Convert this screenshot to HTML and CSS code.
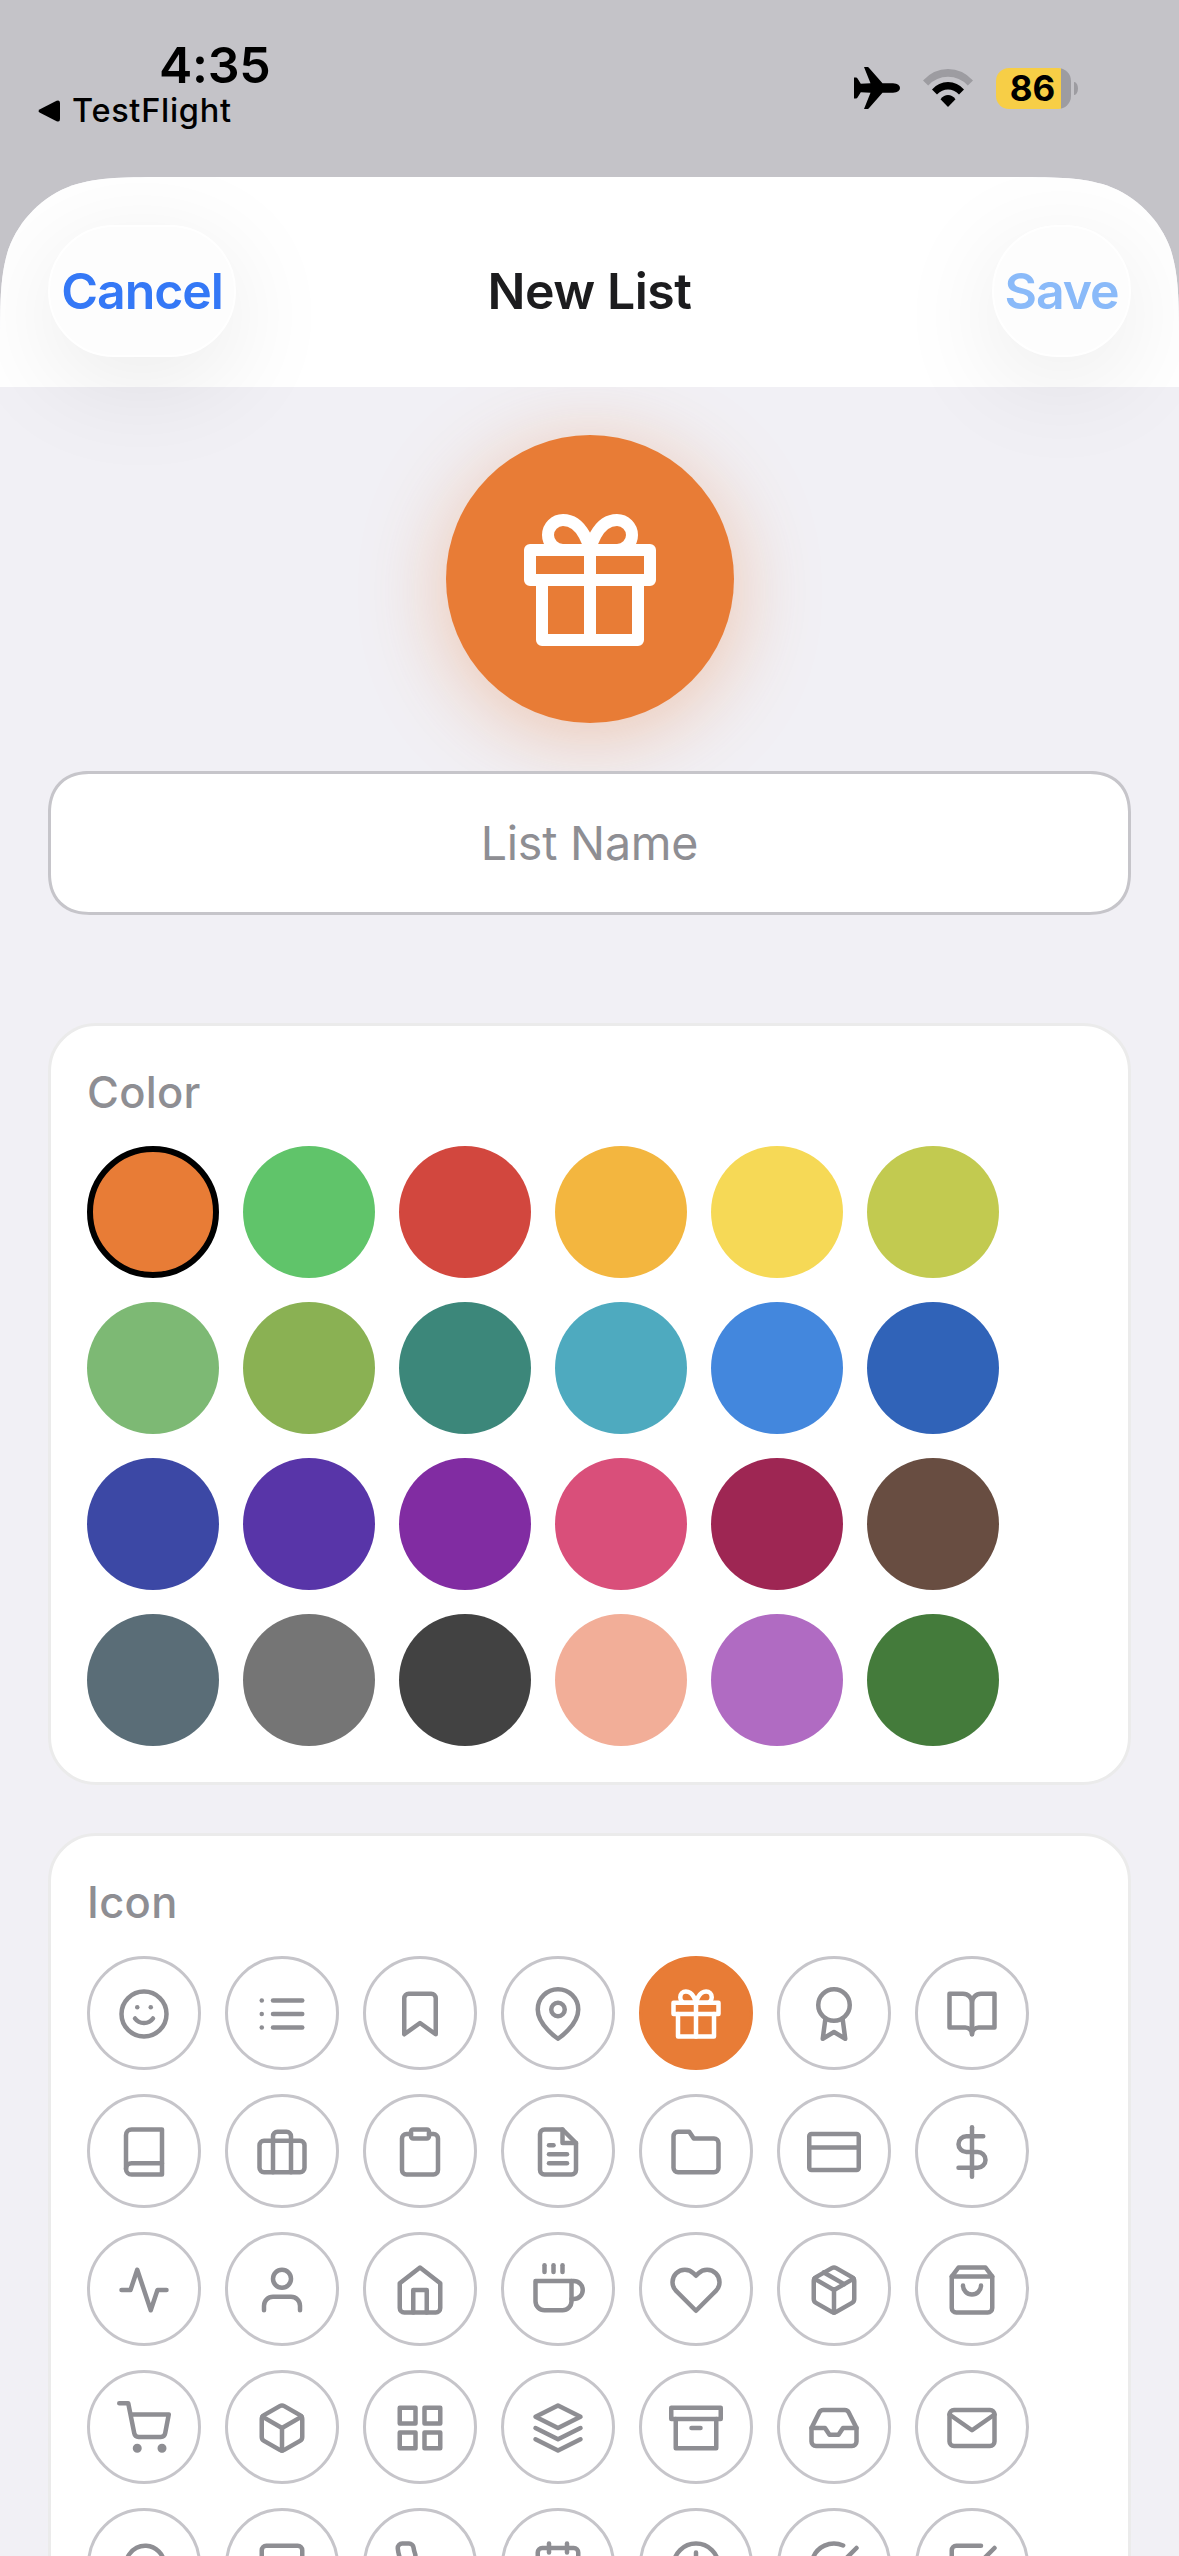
FILE: index.html
```html
<!DOCTYPE html>
<html lang="en">
<head>
    <meta charset="UTF-8">
    <meta name="viewport" content="width=device-width, initial-scale=1.0">
    <title>New List</title>
    <link rel="stylesheet" href="styles.css">
</head>
<body>
    <div class="statusbar">
        <div class="status-left">
            <div class="time">4:35</div>
            <div class="back">
                <svg class="back-arrow" viewBox="0 0 22 22"><path d="M2 9.2 18.6.8Q22-.6 22 3v16q0 3.600-3.400 2.200L2 12.800Q-1 11 2 9.200z"/></svg>
                <span>TestFlight</span>
            </div>
        </div>
        <div class="status-right">
            <svg class="plane" viewBox="0 0 46 42"><path d="M10 0h3.500q1 0 1.600 1L28.500 16.200H39q7 .8 7 4.800t-7 4.800H28.500L15.100 41q-.6 1-1.600 1H10l6.500-16.200-9.700-.5L3.500 30.500Q3 31.500 2 31.500H0V10.500h2q1 0 1.500 1l3.300 5.200 9.700-.5z"/></svg>
            <svg class="wifi" viewBox="0 0 50 38">
                <path class="dim" d="M0 11.500Q10.500 0 25 0t25 11.500L44.800 16.500Q36.500 7.800 25 7.800T5.200 16.500z"/>
                <path d="M9 20.500Q15.500 13 25 13t16 7.500L36 25.600Q31 20.600 25 20.600T14 25.600z"/>
                <path d="M17.500 30.200Q21 26 25 26t7.500 4.200L25 38z"/>
            </svg>
            <div class="battery">
                <div class="battery-body">86</div>
                <div class="battery-cap"></div>
            </div>
        </div>
    </div>

    <div class="sheet">
        <div class="header">
            <button class="btn cancel">Cancel</button>
            <h1>New List</h1>
            <button class="btn save" disabled>Save</button>
        </div>

        <div class="content">
            <div class="preview">
                <svg viewBox="0 0 24 24"><polyline points="20 12 20 22 4 22 4 12"/><rect x="2" y="7" width="20" height="5"/><line x1="12" y1="22" x2="12" y2="7"/><path d="M12 7H7.500a2.500 2.500 0 0 1 0-5C11 2 12 7 12 7z"/><path d="M12 7h4.500a2.500 2.500 0 0 0 0-5C13 2 12 7 12 7z"/></svg>
            </div>

            <input class="name" type="text" placeholder="List Name">

            <div class="card">
                <h2>Color</h2>
                <div class="colors">
                    <div class="color orange selected"></div>
                    <div class="color green"></div>
                    <div class="color red"></div>
                    <div class="color amber"></div>
                    <div class="color yellow"></div>
                    <div class="color lime"></div>
                    <div class="color light-green"></div>
                    <div class="color olive"></div>
                    <div class="color teal"></div>
                    <div class="color cyan"></div>
                    <div class="color blue"></div>
                    <div class="color dark-blue"></div>
                    <div class="color indigo"></div>
                    <div class="color violet"></div>
                    <div class="color purple"></div>
                    <div class="color pink"></div>
                    <div class="color maroon"></div>
                    <div class="color brown"></div>
                    <div class="color slate"></div>
                    <div class="color gray"></div>
                    <div class="color dark"></div>
                    <div class="color peach"></div>
                    <div class="color orchid"></div>
                    <div class="color forest"></div>
                </div>
            </div>

            <div class="card">
                <h2>Icon</h2>
                <div class="icons">
                    <div class="icon"><svg viewBox="0 0 24 24"><circle cx="12" cy="12" r="10"/><path d="M8 14s1.500 2 4 2 4-2 4-2"/><line x1="9" y1="9" x2="9.010" y2="9"/><line x1="15" y1="9" x2="15.010" y2="9"/></svg></div>
                    <div class="icon"><svg viewBox="0 0 24 24"><line x1="8" y1="6" x2="21" y2="6"/><line x1="8" y1="12" x2="21" y2="12"/><line x1="8" y1="18" x2="21" y2="18"/><line x1="3" y1="6" x2="3.010" y2="6"/><line x1="3" y1="12" x2="3.010" y2="12"/><line x1="3" y1="18" x2="3.010" y2="18"/></svg></div>
                    <div class="icon"><svg viewBox="0 0 24 24"><path d="M19 21l-7-5-7 5V5a2 2 0 0 1 2-2h10a2 2 0 0 1 2 2z"/></svg></div>
                    <div class="icon"><svg viewBox="0 0 24 24"><path d="M21 10c0 7-9 13-9 13s-9-6-9-13a9 9 0 0 1 18 0z"/><circle cx="12" cy="10" r="3"/></svg></div>
                    <div class="icon active"><svg viewBox="0 0 24 24"><polyline points="20 12 20 22 4 22 4 12"/><rect x="2" y="7" width="20" height="5"/><line x1="12" y1="22" x2="12" y2="7"/><path d="M12 7H7.500a2.500 2.500 0 0 1 0-5C11 2 12 7 12 7z"/><path d="M12 7h4.500a2.500 2.500 0 0 0 0-5C13 2 12 7 12 7z"/></svg></div>
                    <div class="icon"><svg viewBox="0 0 24 24"><circle cx="12" cy="8" r="7"/><polyline points="8.210 13.890 7 23 12 20 17 23 15.790 13.880"/></svg></div>
                    <div class="icon"><svg viewBox="0 0 24 24"><path d="M2 3h6a4 4 0 0 1 4 4v14a3 3 0 0 0-3-3H2z"/><path d="M22 3h-6a4 4 0 0 0-4 4v14a3 3 0 0 1 3-3h7z"/></svg></div>

                    <div class="icon"><svg viewBox="0 0 24 24"><path d="M4 19.500A2.500 2.500 0 0 1 6.500 17H20"/><path d="M6.500 2H20v20H6.500A2.500 2.500 0 0 1 4 19.500v-15A2.500 2.500 0 0 1 6.500 2z"/></svg></div>
                    <div class="icon"><svg viewBox="0 0 24 24"><rect x="2" y="7" width="20" height="14" rx="2" ry="2"/><path d="M16 21V5a2 2 0 0 0-2-2h-4a2 2 0 0 0-2 2v16"/></svg></div>
                    <div class="icon"><svg viewBox="0 0 24 24"><path d="M16 4h2a2 2 0 0 1 2 2v14a2 2 0 0 1-2 2H6a2 2 0 0 1-2-2V6a2 2 0 0 1 2-2h2"/><rect x="8" y="2" width="8" height="4" rx="1" ry="1"/></svg></div>
                    <div class="icon"><svg viewBox="0 0 24 24"><path d="M14 2H6a2 2 0 0 0-2 2v16a2 2 0 0 0 2 2h12a2 2 0 0 0 2-2V8z"/><polyline points="14 2 14 8 20 8"/><line x1="16" y1="13" x2="8" y2="13"/><line x1="16" y1="17" x2="8" y2="17"/><polyline points="10 9 9 9 8 9"/></svg></div>
                    <div class="icon"><svg viewBox="0 0 24 24"><path d="M22 19a2 2 0 0 1-2 2H4a2 2 0 0 1-2-2V5a2 2 0 0 1 2-2h5l2 3h9a2 2 0 0 1 2 2z"/></svg></div>
                    <div class="icon"><svg viewBox="0 0 24 24"><rect x="1" y="4" width="22" height="16" rx="1" ry="1"/><line x1="1" y1="10" x2="23" y2="10"/></svg></div>
                    <div class="icon"><svg viewBox="0 0 24 24"><line x1="12" y1="1" x2="12" y2="23"/><path d="M17 5H9.500a3.500 3.500 0 0 0 0 7h5a3.500 3.500 0 0 1 0 7H6"/></svg></div>

                    <div class="icon"><svg viewBox="0 0 24 24"><polyline points="22 12 18 12 15 21 9 3 6 12 2 12"/></svg></div>
                    <div class="icon"><svg viewBox="0 0 24 24"><path d="M20 21v-2a4 4 0 0 0-4-4H8a4 4 0 0 0-4 4v2"/><circle cx="12" cy="7" r="4"/></svg></div>
                    <div class="icon"><svg viewBox="0 0 24 24"><path d="M3 9l9-7 9 7v11a2 2 0 0 1-2 2H5a2 2 0 0 1-2-2z"/><polyline points="9 22 9 12 15 12 15 22"/></svg></div>
                    <div class="icon"><svg viewBox="0 0 24 24"><path d="M18 8h1a4 4 0 0 1 0 8h-1"/><path d="M2 8h16v9a4 4 0 0 1-4 4H6a4 4 0 0 1-4-4V8z"/><line x1="6" y1="1" x2="6" y2="4"/><line x1="10" y1="1" x2="10" y2="4"/><line x1="14" y1="1" x2="14" y2="4"/></svg></div>
                    <div class="icon"><svg viewBox="0 0 24 24"><path d="M20.840 4.610a5.500 5.500 0 0 0-7.780 0L12 5.670l-1.060-1.060a5.500 5.500 0 0 0-7.780 7.780l1.060 1.060L12 21.230l7.780-7.780 1.060-1.060a5.500 5.500 0 0 0 0-7.780z"/></svg></div>
                    <div class="icon"><svg viewBox="0 0 24 24"><line x1="16.500" y1="9.400" x2="7.500" y2="4.210"/><path d="M21 16V8a2 2 0 0 0-1-1.730l-7-4a2 2 0 0 0-2 0l-7 4A2 2 0 0 0 3 8v8a2 2 0 0 0 1 1.730l7 4a2 2 0 0 0 2 0l7-4A2 2 0 0 0 21 16z"/><polyline points="3.270 6.960 12 12.010 20.730 6.960"/><line x1="12" y1="22.080" x2="12" y2="12"/></svg></div>
                    <div class="icon"><svg viewBox="0 0 24 24"><path d="M6 2L3 6v14a2 2 0 0 0 2 2h14a2 2 0 0 0 2-2V6l-3-4z"/><line x1="3" y1="6" x2="21" y2="6"/><path d="M16 10a4 4 0 0 1-8 0"/></svg></div>

                    <div class="icon"><svg viewBox="0 0 24 24"><circle cx="9" cy="21" r="1"/><circle cx="20" cy="21" r="1"/><path d="M1 1h4l2.680 13.390a2 2 0 0 0 2 1.610h9.720a2 2 0 0 0 2-1.610L23 6H6"/></svg></div>
                    <div class="icon"><svg viewBox="0 0 24 24"><path d="M21 16V8a2 2 0 0 0-1-1.730l-7-4a2 2 0 0 0-2 0l-7 4A2 2 0 0 0 3 8v8a2 2 0 0 0 1 1.730l7 4a2 2 0 0 0 2 0l7-4A2 2 0 0 0 21 16z"/><polyline points="3.270 6.960 12 12.010 20.730 6.960"/><line x1="12" y1="22.080" x2="12" y2="12"/></svg></div>
                    <div class="icon"><svg viewBox="0 0 24 24"><rect x="3" y="3" width="7" height="7"/><rect x="14" y="3" width="7" height="7"/><rect x="14" y="14" width="7" height="7"/><rect x="3" y="14" width="7" height="7"/></svg></div>
                    <div class="icon"><svg viewBox="0 0 24 24"><polygon points="12 2 2 7 12 12 22 7 12 2"/><polyline points="2 17 12 22 22 17"/><polyline points="2 12 12 17 22 12"/></svg></div>
                    <div class="icon"><svg viewBox="0 0 24 24"><polyline points="21 8 21 21 3 21 3 8"/><rect x="1" y="3" width="22" height="5"/><line x1="10" y1="12" x2="14" y2="12"/></svg></div>
                    <div class="icon"><svg viewBox="0 0 24 24"><polyline points="22 12 16 12 14 15 10 15 8 12 2 12"/><path d="M5.450 5.110L2 12v6a2 2 0 0 0 2 2h16a2 2 0 0 0 2-2v-6l-3.450-6.890A2 2 0 0 0 16.760 4H7.240a2 2 0 0 0-1.790 1.110z"/></svg></div>
                    <div class="icon"><svg viewBox="0 0 24 24"><path d="M4 4h16c1.100 0 2 .9 2 2v12c0 1.100-.9 2-2 2H4c-1.100 0-2-.9-2-2V6c0-1.100.9-2 2-2z"/><polyline points="22 6 12 13 2 6"/></svg></div>

                    <div class="icon"><svg viewBox="0 0 24 24"><path d="M21 11.500a8.380 8.380 0 0 1-.9 3.800 8.500 8.500 0 0 1-7.600 4.700 8.380 8.380 0 0 1-3.800-.9L3 21l1.900-5.700a8.380 8.380 0 0 1-.9-3.800 8.500 8.500 0 0 1 4.700-7.600 8.380 8.380 0 0 1 3.800-.9h.5a8.480 8.480 0 0 1 8 8v.5z"/></svg></div>
                    <div class="icon"><svg viewBox="0 0 24 24"><path d="M21 15a2 2 0 0 1-2 2H7l-4 4V5a2 2 0 0 1 2-2h14a2 2 0 0 1 2 2z"/></svg></div>
                    <div class="icon"><svg viewBox="0 0 24 24"><path d="M22 16.920v3a2 2 0 0 1-2.180 2 19.790 19.790 0 0 1-8.630-3.070 19.500 19.500 0 0 1-6-6 19.790 19.790 0 0 1-3.070-8.670A2 2 0 0 1 4.110 2h3a2 2 0 0 1 2 1.720 12.840 12.840 0 0 0 .7 2.810 2 2 0 0 1-.45 2.110L8.090 9.910a16 16 0 0 0 6 6l1.270-1.270a2 2 0 0 1 2.110-.45 12.840 12.840 0 0 0 2.810.7A2 2 0 0 1 22 16.920z"/></svg></div>
                    <div class="icon"><svg viewBox="0 0 24 24"><rect x="3" y="4" width="18" height="18" rx="2" ry="2"/><line x1="16" y1="2" x2="16" y2="6"/><line x1="8" y1="2" x2="8" y2="6"/><line x1="3" y1="10" x2="21" y2="10"/></svg></div>
                    <div class="icon"><svg viewBox="0 0 24 24"><circle cx="12" cy="12" r="10"/><polyline points="12 6 12 12 16 14"/></svg></div>
                    <div class="icon"><svg viewBox="0 0 24 24"><path d="M22 11.080V12a10 10 0 1 1-5.930-9.140"/><polyline points="22 4 12 14.010 9 11.010"/></svg></div>
                    <div class="icon"><svg viewBox="0 0 24 24"><polyline points="9 11 12 14 22 4"/><path d="M21 12v7a2 2 0 0 1-2 2H5a2 2 0 0 1-2-2V5a2 2 0 0 1 2-2h11"/></svg></div>
                </div>
            </div>
        </div>
    </div>
</body>
</html>
```
FILE: styles.css
```css
* {
    box-sizing: border-box;
}

body {
    margin: 0;
    height: 2556px;
    overflow: hidden;
    font-family: "Inter", "Liberation Sans", sans-serif;
    background-color: #c4c3c8;
    color: #000000;
}

h1, h2 {
    margin: 0;
}

/* status bar */
.statusbar {
    display: flex;
    justify-content: space-between;
    height: 177px;
    padding: 36px 101px 0 38px;
}

.time {
    padding-left: 121px;
    font-size: 50px;
    font-weight: 600;
    line-height: 58px;
    letter-spacing: -0.3px;
}

.back {
    display: flex;
    align-items: center;
    gap: 12px;
    font-size: 32.5px;
    font-weight: 500;
    line-height: 33px;
    letter-spacing: 0.7px;
}

.back-arrow {
    width: 22px;
    height: 22px;
}

.status-right {
    display: flex;
    align-items: center;
    height: 104px;
}

.plane {
    width: 46px;
    height: 42px;
    margin-right: 23px;
}

.wifi {
    width: 50px;
    height: 38px;
    margin-right: 23px;
}

.wifi .dim {
    fill: #9d9ca1;
}

.battery {
    display: flex;
    align-items: center;
    gap: 3px;
}

.battery-body {
    width: 75px;
    height: 41px;
    padding-right: 2px;
    border-radius: 13px;
    background: linear-gradient(to right, #f7ce46 65px, #9d9ca1 65px);
    font-size: 35px;
    font-weight: 700;
    line-height: 40px;
    text-align: center;
}

.battery-cap {
    width: 4px;
    height: 13px;
    border-radius: 0 4px 4px 0 / 0 7px 7px 0;
    background-color: #9d9ca1;
}

/* sheet */
.sheet {
    height: 2379px;
    background-color: #f1f0f5;
    clip-path: path("M0 174C0 124 0 99 8.500 72C19.300 42.500 42.500 19.300 72 8.500C99 0 124 0 174 0H1005C1055 0 1080 0 1107 8.500C1136.500 19.300 1159.700 42.500 1170.500 72C1179 99 1179 124 1179 174V2379H0z");
}

.header {
    position: relative;
    z-index: 1;
    display: flex;
    justify-content: space-between;
    height: 210px;
    padding: 48px 48px 30px;
    background-color: #ffffff;
}

.header h1 {
    /* keeps the title centred between buttons of different width */
    margin-left: -49px;
    font-size: 50px;
    font-weight: 600;
    line-height: 132px;
    letter-spacing: -0.5px;
    color: #1c1c1e;
}

.btn {
    height: 132px;
    padding: 0;
    border: 2px solid #ffffff;
    border-radius: 66px;
    background-color: #fdfdfd;
    box-shadow: 0 24px 110px rgba(0, 0, 0, 0.09);
    font-family: inherit;
    font-size: 50px;
    font-weight: 600;
    letter-spacing: -1.1px;
}

.cancel {
    width: 188px;
    color: #3478f6;
}

.save {
    width: 139px;
    color: #8abaf9;
}

.content {
    display: flex;
    flex-direction: column;
    padding: 48px;
}

.preview {
    display: flex;
    justify-content: center;
    align-items: center;
    align-self: center;
    width: 288px;
    height: 288px;
    padding-top: 2px;
    border-radius: 50%;
    background-color: #e87c36;
    box-shadow: 0 12px 84px rgba(232, 124, 54, 0.38);
}

.preview svg,
.icon svg {
    width: 144px;
    height: 144px;
    fill: none;
    stroke: #ffffff;
    stroke-width: 2;
    stroke-linecap: round;
    stroke-linejoin: round;
}

.name {
    position: relative;
    height: 144px;
    margin: 48px 0 108px;
    padding: 0;
    border: 3px solid #c6c5ca;
    border-radius: 42px;
    corner-shape: superellipse(1.2);
    background-color: #ffffff;
    font-family: inherit;
    font-size: 46.5px;
    letter-spacing: -0.2px;
    text-align: center;
}

.name::placeholder {
    color: #8e8e93;
}

.card {
    margin-bottom: 48px;
    padding: 36px;
    border: 3px solid #ebebeb;
    border-radius: 48px;
    background-color: #ffffff;
}

.card h2 {
    margin-bottom: 24px;
    font-size: 43.5px;
    font-weight: 500;
    line-height: 60px;
    letter-spacing: 0.3px;
    color: #8e8e93;
}

.colors {
    display: grid;
    grid-template-columns: repeat(6, 132px);
    gap: 24px;
}

.color {
    height: 132px;
    border-radius: 50%;
}

.color.selected {
    border: 6px solid #000000;
}

.orange { background-color: #e87c36; }
.green { background-color: #60c46a; }
.red { background-color: #d2473e; }
.amber { background-color: #f3b63f; }
.yellow { background-color: #f6d956; }
.lime { background-color: #c2ca50; }
.light-green { background-color: #7db974; }
.olive { background-color: #8ab153; }
.teal { background-color: #3c877a; }
.cyan { background-color: #4eaabf; }
.blue { background-color: #4387dd; }
.dark-blue { background-color: #3063b8; }
.indigo { background-color: #3c48a5; }
.violet { background-color: #5835a8; }
.purple { background-color: #812ca2; }
.pink { background-color: #d94f7a; }
.maroon { background-color: #9e2653; }
.brown { background-color: #684d41; }
.slate { background-color: #5a6d77; }
.gray { background-color: #757575; }
.dark { background-color: #424242; }
.peach { background-color: #f2ae98; }
.orchid { background-color: #b06bc2; }
.forest { background-color: #447b3b; }

.icons {
    display: grid;
    grid-template-columns: repeat(7, 114px);
    gap: 24px;
}

.icon {
    display: flex;
    justify-content: center;
    align-items: center;
    height: 114px;
    padding-top: 1.5px;
    border: 3px solid #c6c5ca;
    border-radius: 50%;
}

.icon svg {
    width: 54px;
    height: 54px;
    stroke: #8e8e93;
}

.icon.active {
    border-color: #e87c36;
    background-color: #e87c36;
}

.icon.active svg {
    stroke: #ffffff;
}
```
